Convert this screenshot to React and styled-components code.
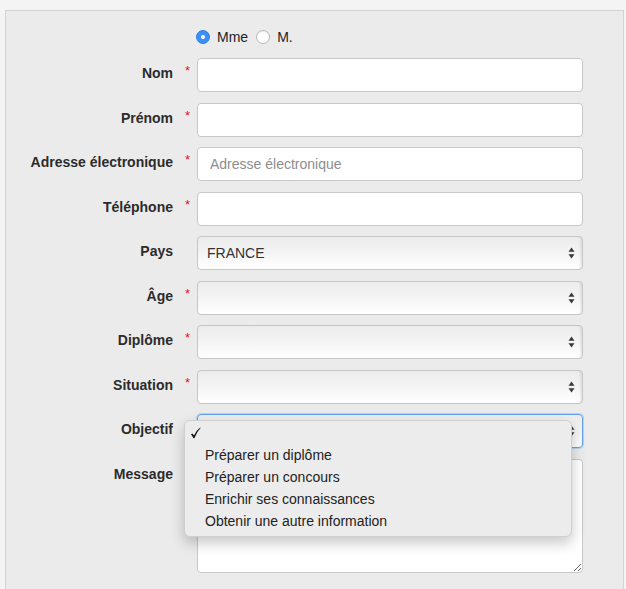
import React from 'react';
import styled, { createGlobalStyle } from 'styled-components';

const GlobalStyle = createGlobalStyle`
  html, body {
    margin: 0;
    padding: 0;
    background: #f4f4f4;
    font-family: "Liberation Sans", Arial, sans-serif;
    color: #2b2b2b;
  }
  * {
    box-sizing: border-box;
  }
`;

const Panel = styled.div`
  margin: 10px 2px 0 5px;
  background: #ebebeb;
  border: 1px solid #d3d3d3;
  border-bottom: none;
  padding: 16px 0 40px 0;
  min-height: 579px;
`;

const Form = styled.div`
  display: grid;
  grid-template-columns: 167px 24px 386px;
  row-gap: 10.5px;
`;

const RadioRow = styled.div`
  grid-column: 3;
  display: flex;
  align-items: center;
  height: 20px;
  margin-left: -1px;
  margin-bottom: 0.5px;
  font-size: 14px;
  color: #222;
`;

const RadioOption = styled.label`
  display: flex;
  align-items: center;
  gap: 7px;
  margin-right: 8px;
`;

const RadioDot = styled.span`
  width: 14px;
  height: 14px;
  border-radius: 50%;
  display: flex;
  align-items: center;
  justify-content: center;
  background: ${(p) => (p.$checked ? '#3b8ff5' : '#ffffff')};
  border: 1px solid ${(p) => (p.$checked ? '#2f80e6' : '#b9b9b9')};
  box-shadow: ${(p) => (p.$checked ? 'none' : 'inset 0 1px 1px rgba(0,0,0,0.08)')};

  &::after {
    content: '';
    display: ${(p) => (p.$checked ? 'block' : 'none')};
    width: 4px;
    height: 4px;
    border-radius: 50%;
    background: #fff;
  }
`;

const Label = styled.div`
  grid-column: 1;
  text-align: right;
  font-size: 14px;
  font-weight: bold;
  line-height: 20px;
  padding-top: 5px;
  color: #2b2b2b;
  white-space: nowrap;
`;

const Required = styled.div`
  grid-column: 2;
  color: #e3151d;
  font-size: 13px;
  line-height: 14px;
  padding: 6px 0 0 12px;
`;

const Field = styled.div`
  grid-column: 3;
  position: relative;
`;

const TextInput = styled.input`
  display: block;
  width: 100%;
  height: 34px;
  border: 1px solid #c8c8c8;
  border-radius: 4px;
  background: #fff;
  padding: 0 12px;
  font-family: "Liberation Sans", Arial, sans-serif;
  font-size: 14px;
  color: #333;
  outline: none;

  &::placeholder {
    color: #8d8d8d;
  }
`;

const SelectBox = styled.div`
  height: 34px;
  display: flex;
  align-items: center;
  justify-content: space-between;
  padding: 0 7px 0 9px;
  border: 1px solid ${(p) => (p.$focused ? '#5fa2ea' : '#c6c6c6')};
  border-radius: 4px;
  background: linear-gradient(to bottom, #ececec 0%, #f3f3f3 45%, #ffffff 100%);
  box-shadow: ${(p) =>
    p.$focused ? '0 0 0 1px rgba(95,162,234,0.35)' : 'inset -3px 0 3px -2px rgba(0,0,0,0.12)'};
  font-size: 14px;
  color: #333;
`;

const TextArea = styled.textarea`
  display: block;
  width: 100%;
  height: 114px;
  border: 1px solid #c8c8c8;
  border-radius: 4px;
  background: #fff;
  resize: vertical;
  font-family: "Liberation Sans", Arial, sans-serif;
  font-size: 14px;
  outline: none;
`;

const Menu = styled.div`
  position: absolute;
  top: 6px;
  left: -13px;
  width: 388px;
  padding: 1px 0 4px 0;
  background: #ececec;
  border: 1px solid #cfcfcf;
  border-radius: 6px;
  box-shadow: 0 6px 14px rgba(0, 0, 0, 0.22);
  z-index: 10;
`;

const MenuItem = styled.div`
  height: 22px;
  display: flex;
  align-items: center;
  padding-left: 20px;
  font-size: 14px;
  color: #222;
  position: relative;
`;

const CheckMark = styled.svg`
  position: absolute;
  left: 5px;
  top: 5px;
`;

function Arrows() {
  return (
    <svg width="7" height="12" viewBox="0 0 7 12">
      <path d="M3.5 0.5 L6.5 4.8 L0.5 4.8 Z" fill="#3a3a3a" />
      <path d="M3.5 11.5 L6.5 7.2 L0.5 7.2 Z" fill="#3a3a3a" />
    </svg>
  );
}

const objectifs = [
  'Préparer un diplôme',
  'Préparer un concours',
  'Enrichir ses connaissances',
  'Obtenir une autre information',
];

function Row({ label, required, children }) {
  return (
    <>
      <Label>{label}</Label>
      {required ? <Required>*</Required> : <div />}
      <Field>{children}</Field>
    </>
  );
}

export default function App() {
  return (
    <>
      <GlobalStyle />
      <Panel>
        <Form>
          <RadioRow>
            <RadioOption>
              <RadioDot $checked />
              Mme
            </RadioOption>
            <RadioOption>
              <RadioDot />
              M.
            </RadioOption>
          </RadioRow>

          <Row label="Nom" required>
            <TextInput type="text" />
          </Row>
          <Row label="Prénom" required>
            <TextInput type="text" />
          </Row>
          <Row label="Adresse électronique" required>
            <TextInput type="email" placeholder="Adresse électronique" />
          </Row>
          <Row label="Téléphone" required>
            <TextInput type="tel" />
          </Row>
          <Row label="Pays">
            <SelectBox>
              <span>FRANCE</span>
              <Arrows />
            </SelectBox>
          </Row>
          <Row label="Âge" required>
            <SelectBox>
              <span />
              <Arrows />
            </SelectBox>
          </Row>
          <Row label="Diplôme" required>
            <SelectBox>
              <span />
              <Arrows />
            </SelectBox>
          </Row>
          <Row label="Situation" required>
            <SelectBox>
              <span />
              <Arrows />
            </SelectBox>
          </Row>
          <Row label="Objectif">
            <SelectBox $focused>
              <span />
              <Arrows />
            </SelectBox>
            <Menu>
              <MenuItem>
                <CheckMark width="11" height="12" viewBox="0 0 11 12">
                  <path
                    d="M1 7.2 L2.4 6.4 L4 8.6 Q6.3 3.5 10.2 0.6 L10.6 1.1 Q7 4.6 4.4 11.2 L3.6 11.2 Z"
                    fill="#111"
                  />
                </CheckMark>
              </MenuItem>
              {objectifs.map((o) => (
                <MenuItem key={o}>{o}</MenuItem>
              ))}
            </Menu>
          </Row>
          <Row label="Message">
            <TextArea />
          </Row>
        </Form>
      </Panel>
    </>
  );
}
